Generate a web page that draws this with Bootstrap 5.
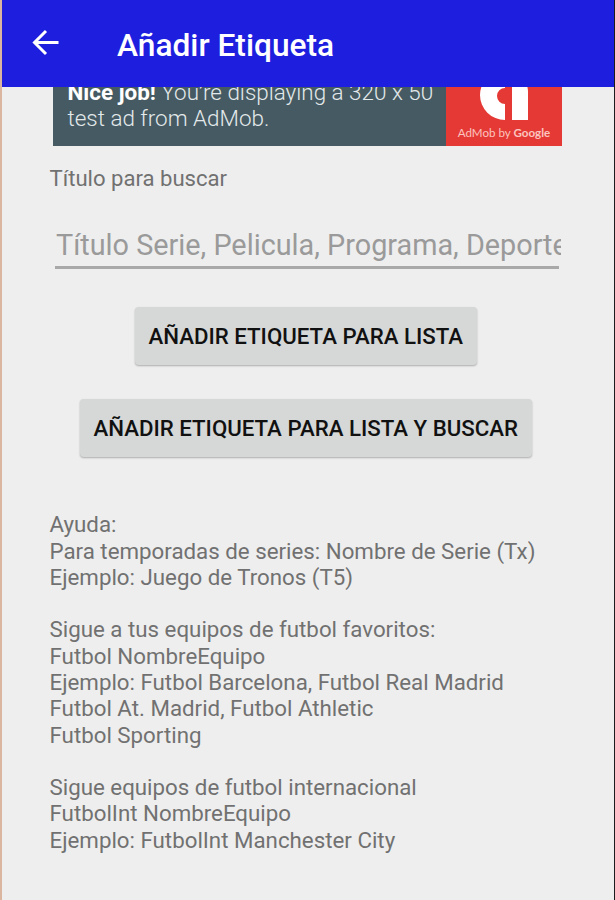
<!DOCTYPE html>
<html lang="es">
<head>
<meta charset="utf-8">
<meta name="viewport" content="width=device-width, initial-scale=1">
<title>Añadir Etiqueta</title>
<link href="https://cdn.jsdelivr.net/npm/bootstrap@5.3.0/dist/css/bootstrap.min.css" rel="stylesheet">
<style>
  body { font-family: Roboto, "Noto Sans", sans-serif; background: #eee; color: #717171; }
  .screen { height: 900px; border-left: 2px solid #dab59f; border-right: 1px solid #1c1c1c; background: #eee; }
  .app-bar { height: 87px; background: #1e1edf; padding: 0 0 0 28px; }
  .app-bar svg { margin-bottom: 2px; }
  .app-title { font-size: 31.7px; font-weight: 500; line-height: 36px; margin: 4px 0 0 57px; }
  .page-body { padding: 0 52px 0 47.5px; }
  .ad-window { height: 59px; margin-left: 3px; }
  .ad { height: 80px; background: #455a62; }
  .ad-copy { font-size: 22.45px; line-height: 26px; font-weight: 300; color: #e3e9eb; padding: 13px 0 0 15px; }
  .ad-copy strong { font-weight: 700; color: #fff; }
  .ad-brand { width: 116px; background: #e53935; }
  .ad-brand span { font: 400 11.6px/14px Lato, sans-serif; color: #fbc4bf; }
  .field-label, .help { font-size: 22.3px; line-height: 26.28px; }
  .field-label { font-size: 22.1px; margin-top: 19px; }
  .tag-input { width: 507px; height: 60px; margin: 24px 0 0 4.5px; padding: 0 0 0 2px; font-size: 28.8px; border: 0; border-radius: 0; background: transparent; }
  .tag-input::placeholder { color: #9a9a9a; opacity: 1; }
  .tag-input:focus { box-shadow: none; background: transparent; }
  .input-rule { height: 3px; margin: -9px 3px 0 5px; background: #a9a9a9; }
  .btn-tag { height: 58px; padding: 0 0 1px; font-size: 22.25px; font-weight: 500; color: #111; background: #d6d8d7; border: 0; border-radius: 4px; box-shadow: 0 1px 2px rgba(0,0,0,.28); }
  .btn-list { width: 342px; margin-top: 38px; }
  .btn-search { width: 452px; margin-top: 34px; }
  .btn-tag { padding-top: 2px; }
  .help { margin-top: 54px; }
</style>
</head>
<body>
<div class="screen overflow-hidden">
  <header class="app-bar d-flex align-items-center text-white">
    <svg width="30" height="30" viewBox="0 0 30 30" fill="none" stroke="#fff" stroke-width="3" aria-hidden="true"><path d="M28.5 14.5H4.5M16 3 4.5 14.5 16 26"/></svg>
    <h1 class="app-title">Añadir Etiqueta</h1>
  </header>
  <main class="page-body">
    <div class="ad-window d-flex flex-column justify-content-end overflow-hidden">
      <div class="ad d-flex flex-shrink-0">
        <div class="ad-copy flex-grow-1 text-nowrap"><strong>Nice job!</strong> You’re displaying a 320 x 50<br>test ad from AdMob.</div>
        <div class="ad-brand d-flex flex-column align-items-center flex-shrink-0">
          <svg width="116" height="60" viewBox="0 0 116 60" aria-hidden="true"><path d="M59 54A25 25 0 0 1 59 4V22A8 8 0 0 0 59 38Z" fill="#fff"/><path d="M66 54V4A24 24 0 0 1 82 28V54Z" fill="#fff"/></svg>
          <span>AdMob by <b>Google</b></span>
        </div>
      </div>
    </div>
    <label class="field-label d-block" for="titulo">Título para buscar</label>
    <input id="titulo" class="form-control tag-input" placeholder="Título Serie, Pelicula, Programa, Deportes">
    <div class="input-rule"></div>
    <div class="d-flex flex-column align-items-center">
      <button class="btn btn-tag btn-list" type="button">AÑADIR ETIQUETA PARA LISTA</button>
      <button class="btn btn-tag btn-search" type="button">AÑADIR ETIQUETA PARA LISTA Y BUSCAR</button>
    </div>
    <section class="help text-nowrap">
      Ayuda:<br>
      Para temporadas de series: Nombre de Serie (Tx)<br>
      Ejemplo: Juego de Tronos (T5)<br><br>
      Sigue a tus equipos de futbol favoritos:<br>
      Futbol NombreEquipo<br>
      Ejemplo: Futbol Barcelona, Futbol Real Madrid<br>
      Futbol At. Madrid, Futbol Athletic<br>
      Futbol Sporting<br><br>
      Sigue equipos de futbol internacional<br>
      FutbolInt NombreEquipo<br>
      Ejemplo: FutbolInt Manchester City
    </section>
  </main>
</div>
<script src="https://cdn.jsdelivr.net/npm/bootstrap@5.3.0/dist/js/bootstrap.bundle.min.js"></script>
</body>
</html>
